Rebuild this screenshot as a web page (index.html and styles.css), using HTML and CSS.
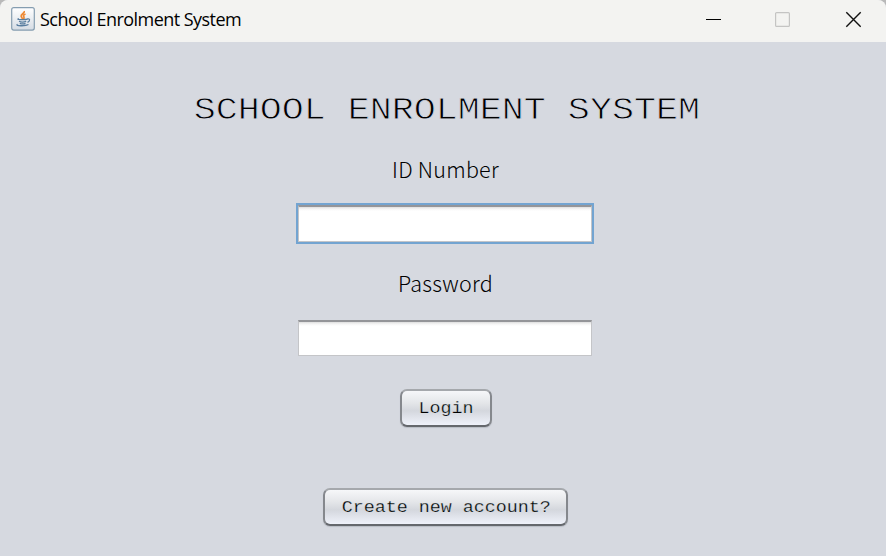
FILE: index.html
```
<!DOCTYPE html>
<html lang="en">
<head>
<meta charset="utf-8">
<title>School Enrolment System</title>
<link rel="stylesheet" href="styles.css">
</head>
<body>
<div class="window">
  <header class="titlebar">
    <svg class="app-icon" width="24" height="24" viewBox="0 0 24 24">
      <defs><linearGradient id="tile" x1="0" y1="0" x2="0" y2="1"><stop offset="0" stop-color="#fff"/><stop offset="1" stop-color="#d5dce4"/></linearGradient></defs>
      <rect x=".7" y=".7" width="22.6" height="22.4" rx="2" fill="url(#tile)" stroke="#859db0" stroke-width="1.2"/>
      <path d="M13.3 4c.8 2.2-3.7 3.1-3.2 5.2.2 1 1.3 1.8 1.7 3M14.5 7c-2.8 1.1-2 2.2-1.5 3.2.2.6 0 1.3-.7 1.8" fill="none" stroke="#ee8a35" stroke-width="1.7"/>
      <path d="M7.8 11.5c-2.5.9.5 1.3 4 1.2 2 0 3.8-.2 4.5-.5M8 14.2c1.7.9 5.4.8 7.2.1M8.8 16.3c1.6.7 4.3.6 5.7 0M6.5 17.3c-3 1.7 8 2.1 11 .2M16.2 12c3-.8 3.2 2.1.3 3.4" fill="none" stroke="#587d9f" stroke-width="1.3"/>
    </svg>
    <span class="caption">School Enrolment System</span>
    <svg class="controls" width="160" height="18" viewBox="0 0 160 18">
      <path d="M0 9.5h15" stroke="#000"/>
      <rect x="69.6" y="2.6" width="13.8" height="13.8" rx="1" fill="none" stroke="#c4c4c3" stroke-width="1.2"/>
      <path d="M140.3 2.3l14.4 14.4M154.7 2.3l-14.4 14.4" stroke="#111" stroke-width="1.4"/>
    </svg>
  </header>
  <main class="form">
    <h1>SCHOOL ENROLMENT SYSTEM</h1>
    <label class="id-label" for="id">ID Number</label>
    <input class="field focused" id="id" type="text">
    <label class="password-label" for="password">Password</label>
    <input class="field" id="password" type="password">
    <button class="login" type="button"><span>Login</span></button>
    <button class="create" type="button"><span>Create new account?</span></button>
  </main>
</div>
</body>
</html>
```
FILE: styles.css
```
* { box-sizing: border-box; }
body { margin: 0; background: #b9b9b9; }
.window {
  width: 886px; height: 556px; overflow: hidden;
  border-radius: 8px 8px 0 0;
  background: #d6d9e0;
}
.titlebar {
  height: 42px; padding: 0 24px 4px 11px;
  display: flex; align-items: center;
  background: #f3f3f1;
}
.app-icon { flex: none; }
.caption {
  margin-left: 5px;
  font: 18px/24px "Open Sans", sans-serif;
  letter-spacing: -.55px; white-space: nowrap; color: #000;
}
.controls { flex: none; margin-left: auto; margin-right: -4px; }
.form {
  display: flex; flex-direction: column; align-items: center;
  padding: 49px 0 0 5px;
}
h1 {
  margin: 0 0 0 3px; height: 40px;
  font: 400 32px/40px "Liberation Mono", monospace;
  white-space: pre; color: #000;
  transform: scaleX(1.146);
  -webkit-text-stroke: .85px #d6d9e0;
}
label {
  height: 30px;
  font: 300 21.5px/30px "Noto Sans CJK JP", sans-serif;
  letter-spacing: .25px; color: #000;
}
.id-label { margin-top: 23px; }
.password-label { margin-top: 26px; }
.field {
  width: 294px; height: 36px; margin: 21px 2px 0 0; padding: 0 8px;
  border: 1px solid #c4c5c8; border-top: 2px solid #949599; border-radius: 0;
  background: linear-gradient(#dedede, #f5f5f5 2px, #fff 4px);
  font: 18px "Liberation Mono", monospace; outline: none;
}
.focused { height: 37px; box-shadow: 0 0 0 2px #73a4d1; }
.password-label + .field { margin-top: 22px; }
button {
  height: 38px; padding: 0;
  border: 2px solid; border-color: #a5a8ac #85888d #65686d; border-radius: 7px;
  background: linear-gradient(#f6f7f9, #e4e6e9 35%, #d4d7dd 58%, #d8dbe2 65%, #eff2fa);
  box-shadow: 0 1px 1px #b9bdc5;
  font: 16px/32px "Liberation Mono", monospace;
  white-space: nowrap; color: #000;
}
button span {
  display: inline-block; padding: 2px 0 0 1px;
  transform: scaleX(1.146);
  -webkit-text-stroke: .25px #dfe1e6;
}
.login { width: 92px; margin-top: 33px; }
.create { width: 245px; margin-top: 61px; }
```
